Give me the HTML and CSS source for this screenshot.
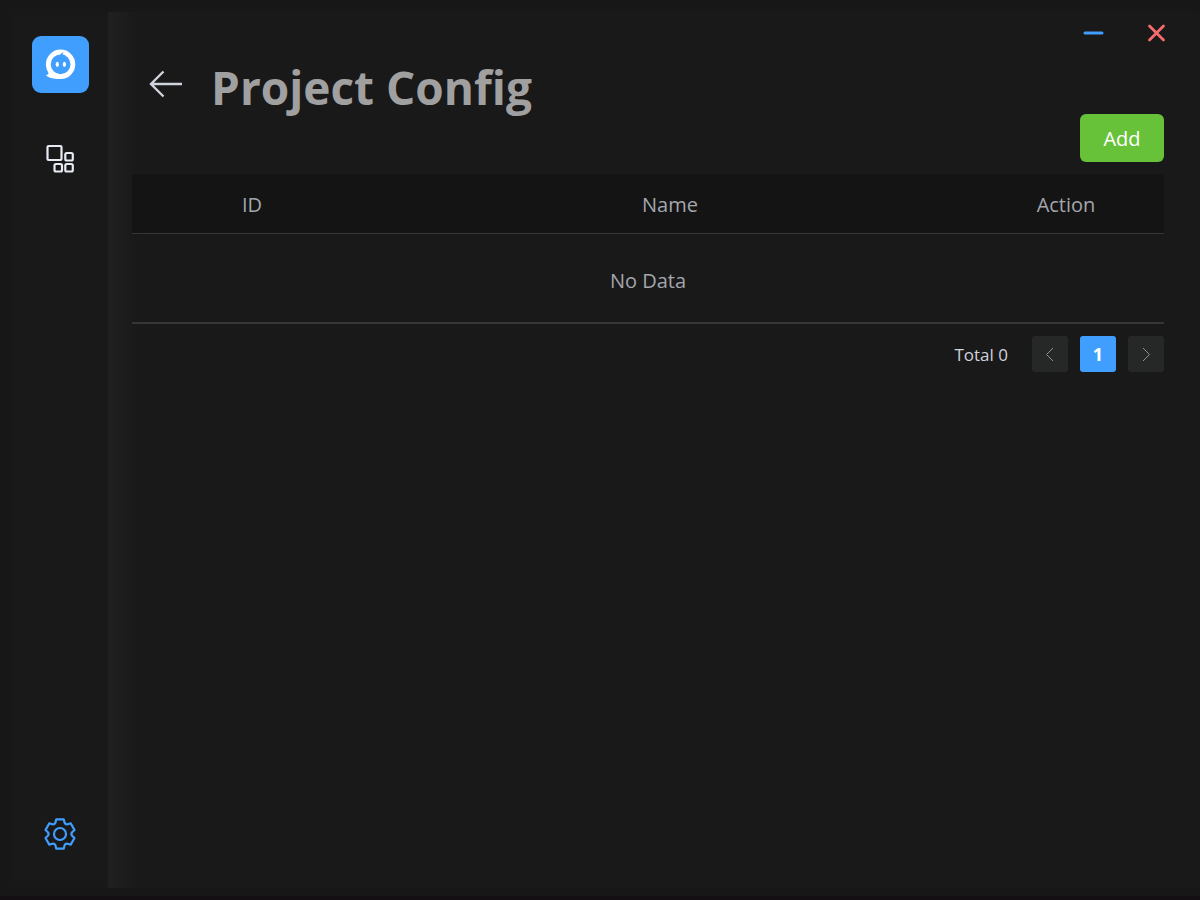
FILE: index.html
```html
<!DOCTYPE html>
<html lang="en">
<head>
<meta charset="utf-8">
<title>Project Config</title>
<link rel="stylesheet" href="styles.css">
</head>
<body>
<div class="window">
  <nav class="sidebar" aria-label="Main">
    <a class="logo" href="#" aria-label="Home">
      <svg width="57" height="57" viewBox="0 0 57 57" fill="none">
        <circle cx="28.600" cy="28.300" r="12.300" stroke="#fff" stroke-width="4.800"/>
        <path d="M15.500 34C17 37 17 38.200 13.800 39.300C17 42.600 24 43.500 29 42.500L25 39Z" fill="#fff"/>
        <path d="M28 18.500L31.500 15.800L30.500 18.200L34 19.500L32 20Z" fill="#409eff"/>
        <ellipse cx="25.300" cy="28.300" rx="1.600" ry="2.600" fill="#fff"/>
        <ellipse cx="32.400" cy="28.300" rx="1.600" ry="2.600" fill="#fff"/>
      </svg>
    </a>
    <a class="nav-link" href="#" aria-label="Projects">
      <svg width="30" height="30" viewBox="0 0 30 30" fill="none" stroke="#e5eaf3" stroke-width="2.200">
        <rect x="2.500" y="2" width="14" height="14" rx="1"/>
        <rect x="20.300" y="9" width="7.500" height="7.500" rx="1.500"/>
        <rect x="9.500" y="20" width="7.500" height="7.500" rx="1.500"/>
        <rect x="20.300" y="20" width="7.500" height="7.500" rx="1.500"/>
      </svg>
    </a>
    <a class="nav-link settings" href="#" aria-label="Settings">
      <svg width="34" height="34" viewBox="-17 -17 34 34" fill="none" stroke="#409eff" stroke-width="2.200" stroke-linejoin="round">
        <path d="M-3.800-14.600H3.800L4.600-11.300Q5.400-9.400 7.500-9.700L10.700-10.600L14.500-4L12.100-1.700Q10.700 0 12.100 1.700L14.500 4L10.700 10.600L7.500 9.700Q5.400 9.400 4.600 11.300L3.800 14.600H-3.800L-4.600 11.300Q-5.400 9.400-7.500 9.700L-10.700 10.600L-14.500 4L-12.100 1.700Q-10.700 0-12.100-1.700L-14.500-4L-10.700-10.600L-7.500-9.700Q-5.400-9.400-4.600-11.300Z"/>
        <circle r="6"/>
      </svg>
    </a>
  </nav>
  <main class="content">
    <div class="window-controls">
      <button class="control" type="button" aria-label="Minimize">
        <svg width="24" height="24" viewBox="0 0 24 24" stroke="#409eff" stroke-width="3" stroke-linecap="round"><path d="M5 12H22"/></svg>
      </button>
      <button class="control" type="button" aria-label="Close">
        <svg width="24" height="24" viewBox="0 0 24 24" stroke="#f56c6c" stroke-width="2.800" stroke-linecap="round"><path d="M5.500 5L19.500 19M19.500 5L5.500 19"/></svg>
      </button>
    </div>
    <header class="page-header">
      <button class="back" type="button" aria-label="Back">
        <svg width="36" height="36" viewBox="0 0 36 36" fill="none" stroke="#cfd3dc" stroke-width="2.400"><path d="M34 18H3M15.500 5.500L3 18L15.500 30.500"/></svg>
      </button>
      <h1 class="title">Project Config</h1>
    </header>
    <div class="toolbar"><button class="add" type="button">Add</button></div>
    <table class="table">
      <thead><tr><th class="col-id" scope="col">ID</th><th scope="col">Name</th><th class="col-action" scope="col">Action</th></tr></thead>
      <tbody><tr><td colspan="3">No Data</td></tr></tbody>
    </table>
    <div class="pagination">
      <span class="total">Total 0</span>
      <button class="page" type="button" aria-label="Previous page" disabled>
        <svg width="18" height="18" viewBox="0 0 18 18" fill="none" stroke="#8d9095"><path d="M12 3L5.500 9.500L12 16"/></svg>
      </button>
      <button class="page current" type="button" aria-current="page">1</button>
      <button class="page" type="button" aria-label="Next page" disabled>
        <svg width="18" height="18" viewBox="0 0 18 18" fill="none" stroke="#8d9095"><path d="M6 3L12.500 9.500L6 16"/></svg>
      </button>
    </div>
  </main>
</div>
</body>
</html>
```
FILE: styles.css
```css
* {
  box-sizing: border-box;
}

body {
  margin: 0;
  background: #191919;
  color: #cfd3dc;
  font-family: "Segoe UI", "Open Sans", "Noto Sans", sans-serif;
}

button {
  padding: 0;
  border: 0;
  background: none;
  color: inherit;
  font: inherit;
  cursor: pointer;
}

svg {
  display: block;
}

.window {
  display: flex;
  min-height: 100vh;
  padding: 12px 0 8px;
  box-shadow: inset 0 0 12px #161616;
  border-bottom: 4px solid #140f12;
}

.sidebar {
  display: flex;
  flex-direction: column;
  align-items: center;
  width: 108px;
  padding: 24px 0 37px 12px;
}

.logo {
  border-radius: 9px;
  background: #409eff;
}

.nav-link {
  margin-top: 51px;
}

.settings {
  margin-top: auto;
}

.content {
  flex: 1;
  padding: 0 36px 0 24px;
  background: linear-gradient(90deg, #202020, #191919 30px);
}

.window-controls {
  display: flex;
  justify-content: flex-end;
  gap: 40px;
  padding-top: 9px;
  margin-right: -4px;
}

.page-header {
  display: flex;
  align-items: center;
  gap: 27px;
  height: 69px;
  padding: 14px 0 0 16px;
}

.back {
  margin-bottom: 6px;
}

.title {
  margin: 0;
  color: #a0a0a0;
  font-size: 46px;
  line-height: 64px;
}

.toolbar {
  display: flex;
  justify-content: flex-end;
  padding-bottom: 12px;
}

.add {
  width: 84px;
  height: 48px;
  border-radius: 6px;
  background: #67c23a;
  color: #fff;
  font-size: 20px;
  font-weight: 500;
}

.table {
  width: 100%;
  border-collapse: separate;
  border-spacing: 0;
  border-bottom: 2px solid #363637;
  table-layout: fixed;
  color: #a3a6ad;
  font-size: 20px;
  text-align: center;
}

.table th {
  height: 60px;
  padding: 2px 0 0;
  border-bottom: 1px solid #363637;
  background: #141414;
  font-weight: 400;
}

.table td {
  height: 88px;
  padding: 4px 0 0;
}

.col-id {
  width: 240px;
}

.col-action {
  width: 196px;
}

.pagination {
  display: flex;
  align-items: center;
  justify-content: flex-end;
  gap: 12px;
  padding-top: 12px;
}

.total {
  margin-right: 12px;
  font-size: 17px;
}

.page {
  display: flex;
  align-items: center;
  justify-content: center;
  width: 36px;
  height: 36px;
  border-radius: 3px;
  background: #262727;
  font-size: 18px;
}

.current {
  background: #409eff;
  color: #fff;
  font-weight: 700;
}
```
